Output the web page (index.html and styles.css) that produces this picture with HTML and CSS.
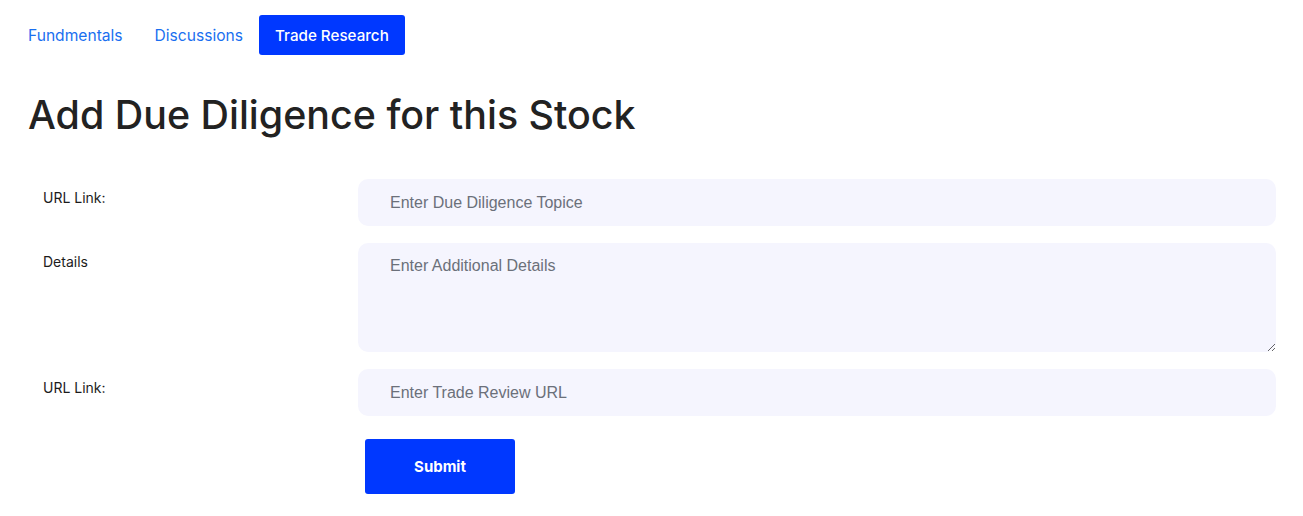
FILE: index.html
```html
<!DOCTYPE html>
<html lang="en">
<head>
<meta charset="utf-8">
<title>Add Due Diligence</title>
<link rel="stylesheet" href="styles.css">
</head>
<body>
<div class="page">
  <nav class="tabs">
    <a class="tab" href="#">Fundmentals</a>
    <a class="tab" href="#">Discussions</a>
    <a class="tab active" href="#">Trade Research</a>
  </nav>
  <h1 class="title">Add Due Diligence for this Stock</h1>
  <form class="form">
    <label class="label">URL Link:</label>
    <input class="field" type="text" placeholder="Enter Due Diligence Topice">
    <label class="label">Details</label>
    <textarea class="field area" placeholder="Enter Additional Details"></textarea>
    <label class="label">URL Link:</label>
    <input class="field" type="text" placeholder="Enter Trade Review URL">
    <div></div>
    <div class="actions"><button class="submit" type="button">Submit</button></div>
  </form>
</div>
</body>
</html>
```

FILE: styles.css
```css
* { box-sizing: border-box; }
body {
  margin: 0;
  background: #fff;
  font-family: Inter, "Noto Sans", sans-serif;
  color: #212121;
}
.page {
  padding: 15px 27px 0 28px;
}
.tabs {
  display: flex;
  margin-left: -16px;
}
.tab {
  display: flex;
  align-items: center;
  height: 40px;
  padding: 0 16px;
  font-size: 15.6px;
  color: #1a6ff0;
  text-decoration: none;
  border-radius: 3px;
}
.tab.active {
  background: #0038ff;
  color: #fff;
  font-weight: 500;
  font-size: 15.2px;
}
.title {
  margin: 36px 0 40px;
  font-size: 39.4px;
  font-weight: 500;
  line-height: 48px;
  color: #222;
}
.form {
  display: grid;
  grid-template-columns: 330px 1fr;
  row-gap: 17px;
}
.label {
  padding: 9px 0 0 15px;
  font-size: 14px;
  line-height: 20px;
  color: #1c1c1c;
}
.field {
  width: 100%;
  height: 47px;
  border: none;
  border-radius: 10px;
  background: #f5f5fe;
  padding: 0 32px;
  font-family: "Liberation Sans", Arial, sans-serif;
  font-size: 16px;
  color: #333;
  outline: none;
}
.field::placeholder { color: #6b707a; }
.area {
  height: 109px;
  padding: 14px 32px;
  line-height: 18px;
  resize: vertical;
}
.actions {
  padding: 6px 0 0 7px;
}
.submit {
  width: 150px;
  height: 55px;
  border: none;
  border-radius: 3px;
  background: #0038ff;
  color: #fff;
  font-family: Inter, "Noto Sans", sans-serif;
  font-size: 15px;
  font-weight: 700;
  cursor: pointer;
}
```
